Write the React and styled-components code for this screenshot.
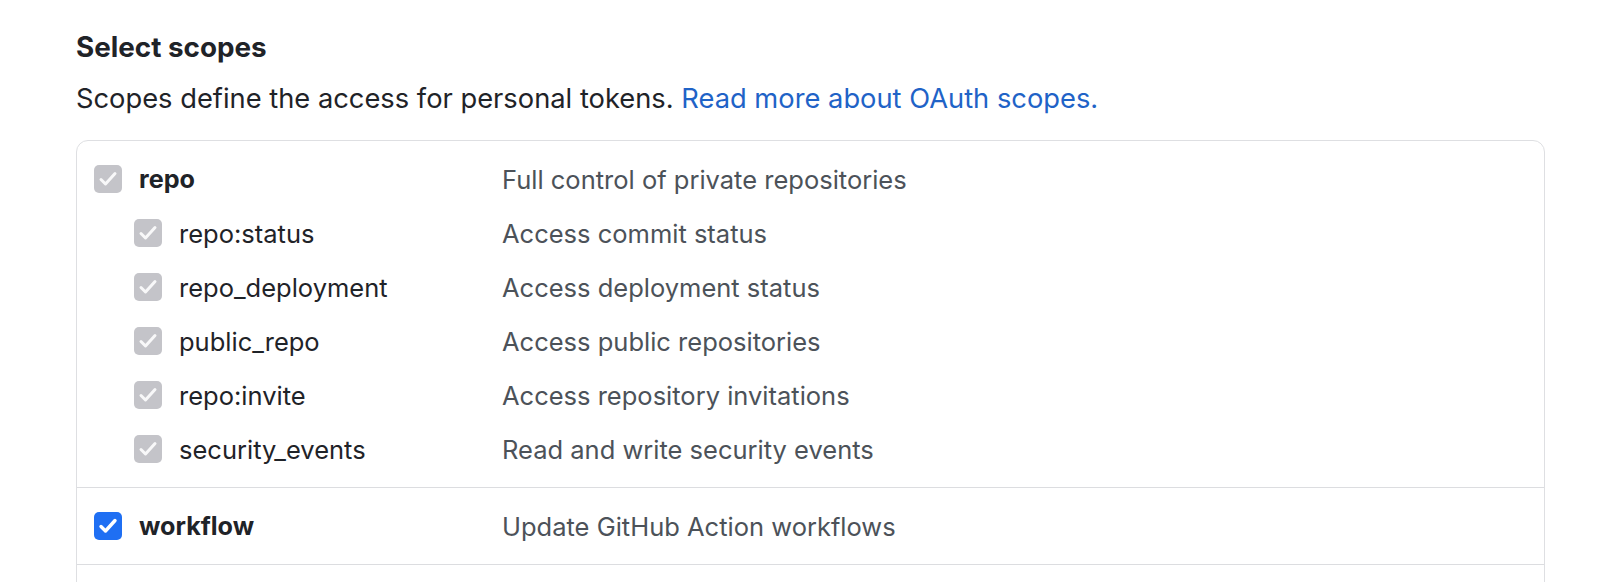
import React from 'react';
import styled, { createGlobalStyle } from 'styled-components';

const GlobalStyle = createGlobalStyle`
  body {
    margin: 0;
    background: #ffffff;
    font-family: Inter, "Liberation Sans", sans-serif;
    color: #1f2328;
    overflow: hidden;
  }
`;

const scopeGroups = [
  {
    name: 'repo',
    description: 'Full control of private repositories',
    children: [
      { name: 'repo:status', description: 'Access commit status' },
      { name: 'repo_deployment', description: 'Access deployment status' },
      { name: 'public_repo', description: 'Access public repositories' },
      { name: 'repo:invite', description: 'Access repository invitations' },
      { name: 'security_events', description: 'Read and write security events' },
    ],
  },
  {
    name: 'workflow',
    description: 'Update GitHub Action workflows',
    active: true,
    children: [],
  },
];

const Page = styled.div`
  padding: 27px 77px 0 76px;
  height: 582px;
  box-sizing: border-box;
  overflow: hidden;
`;

const Heading = styled.h3`
  margin: 0;
  font-size: 27.8px;
  font-weight: 700;
  line-height: 40px;
  color: #1f2328;
`;

const Note = styled.p`
  margin: 13px 0 0;
  font-size: 27.3px;
  line-height: 38px;
  color: #1f2328;
`;

const DocLink = styled.a`
  color: #1f63c7;
  text-decoration: none;
`;

const ScopeBox = styled.div`
  margin-top: 22px;
  border: 1px solid #dedfe2;
  border-radius: 12px;
  height: 520px;
  overflow: hidden;
`;

const Group = styled.div`
  padding: 11px 0 11px 17px;
  border-bottom: 1.5px solid #dcdde0;
`;

const Row = styled.div`
  display: grid;
  grid-template-columns: 408px 1fr;
  align-items: center;
  height: 54px;
`;

const Label = styled.label`
  display: flex;
  align-items: center;
  gap: 17px;
  padding-left: ${(p) => (p.nested ? '40px' : '0')};
  font-size: ${(p) => (p.nested ? '25.5px' : '25.2px')};
  font-weight: ${(p) => (p.nested ? 400 : 700)};
  color: #1f2328;
`;

const Box = styled.span`
  width: 28px;
  height: 28px;
  border-radius: 5px;
  background: ${(p) => (p.active ? '#1f6ff3' : '#c4c4c9')};
  display: inline-flex;
  flex: none;
`;

const Description = styled.span`
  font-size: 25.5px;
  color: #4c5259;
`;

function Check({ active }) {
  return (
    <Box active={active}>
      <svg width="28" height="28" viewBox="0 0 28 28" fill="none">
        <path
          d="M7 14.5 L11.5 19 L21 8.5"
          stroke={active ? '#ffffff' : 'rgba(255,255,255,0.88)'}
          strokeWidth={active ? 3.4 : 3}
          strokeLinecap="round"
          strokeLinejoin="round"
        />
      </svg>
    </Box>
  );
}

function ScopeRow({ name, description, nested, active }) {
  return (
    <Row>
      <Label nested={nested}>
        <Check active={active} />
        {name}
      </Label>
      <Description>{description}</Description>
    </Row>
  );
}

export default function App() {
  return (
    <Page>
      <GlobalStyle />
      <Heading>Select scopes</Heading>
      <Note>
        Scopes define the access for personal tokens.{' '}
        <DocLink href="#">Read more about OAuth scopes.</DocLink>
      </Note>
      <ScopeBox>
        {scopeGroups.map((group) => (
          <Group key={group.name}>
            <ScopeRow name={group.name} description={group.description} active={group.active} />
            {group.children.map((child) => (
              <ScopeRow key={child.name} nested {...child} />
            ))}
          </Group>
        ))}
      </ScopeBox>
    </Page>
  );
}
